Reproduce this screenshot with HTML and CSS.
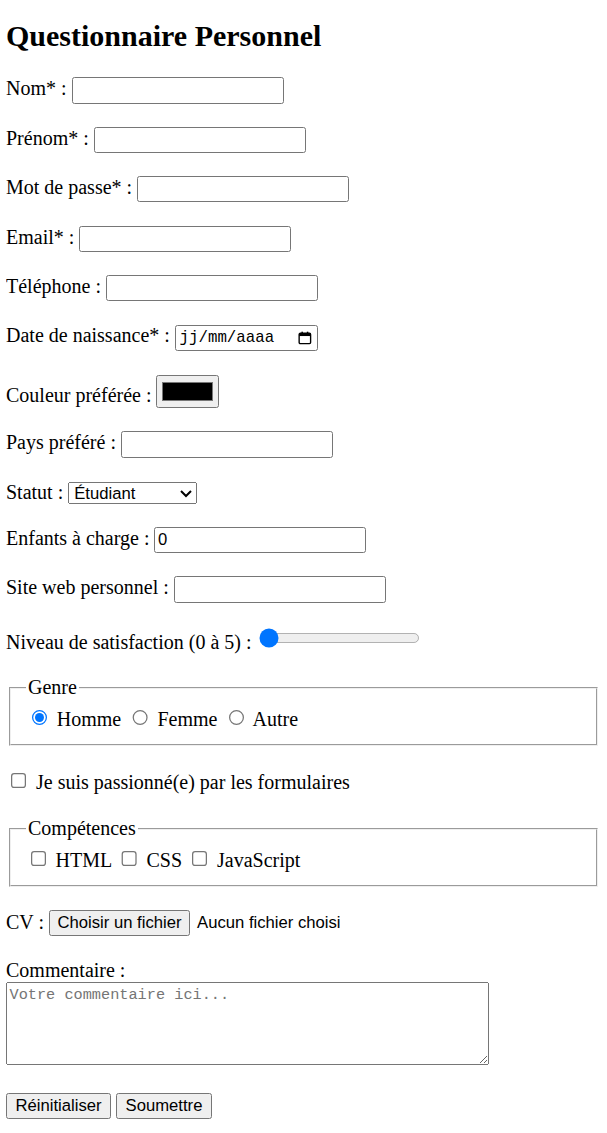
FILE: index.html
```html
<!DOCTYPE html>
<html lang="fr">
<head>
<meta charset="utf-8">
<title>Questionnaire Personnel</title>
<link rel="stylesheet" href="styles.css">
</head>
<body class="page">
<h2 class="title">Questionnaire Personnel</h2>
<form class="form">
  <p class="row"><label for="nom">Nom* :</label> <input class="field" type="text" id="nom"></p>
  <p class="row"><label for="prenom">Prénom* :</label> <input class="field" type="text" id="prenom"></p>
  <p class="row"><label for="mdp">Mot de passe* :</label> <input class="field" type="password" id="mdp"></p>
  <p class="row"><label for="email">Email* :</label> <input class="field" type="email" id="email"></p>
  <p class="row"><label for="tel">Téléphone :</label> <input class="field" type="tel" id="tel"></p>
  <p class="row"><label for="date">Date de naissance* :</label> <span class="datefield"><input class="date-input" type="text" id="date" placeholder="jj/mm/aaaa"><svg class="cal" viewBox="0 0 12 12" width="12" height="12" aria-hidden="true"><rect x="1" y="2" width="10" height="9" rx="1" fill="none" stroke="#000" stroke-width="1.2"/><rect x="1" y="2" width="10" height="2.4" fill="#000"/><rect x="3" y="0.6" width="1.3" height="2" fill="#000"/><rect x="7.7" y="0.6" width="1.3" height="2" fill="#000"/></svg></span></p>
  <p class="row"><label for="couleur">Couleur préférée :</label> <input class="color" type="color" id="couleur" value="#000000"></p>
  <p class="row"><label for="pays">Pays préféré :</label> <input class="field" type="text" id="pays"></p>
  <p class="row"><label for="statut">Statut :</label> <select class="select" id="statut"><option>Étudiant</option><option>Salarié</option><option>Indépendant</option></select></p>
  <p class="row"><label for="enfants">Enfants à charge :</label> <input class="field" type="number" id="enfants" value="0"></p>
  <p class="row"><label for="site">Site web personnel :</label> <input class="field" type="url" id="site"></p>
  <p class="row"><label for="satis">Niveau de satisfaction (0 à 5) :</label> <input class="range" type="range" id="satis" min="0" max="5" value="0"></p>
  <fieldset class="group">
    <legend>Genre</legend>
    <input type="radio" name="genre" id="homme" checked> <label for="homme">Homme</label>
    <input type="radio" name="genre" id="femme"> <label for="femme">Femme</label>
    <input type="radio" name="genre" id="autre"> <label for="autre">Autre</label>
  </fieldset>
  <p class="row"><input type="checkbox" id="passion"> <label for="passion">Je suis passionné(e) par les formulaires</label></p>
  <fieldset class="group">
    <legend>Compétences</legend>
    <input type="checkbox" id="html"> <label for="html">HTML</label>
    <input type="checkbox" id="css"> <label for="css">CSS</label>
    <input type="checkbox" id="js"> <label for="js">JavaScript</label>
  </fieldset>
  <p class="row"><label for="cv">CV :</label> <label class="filebtn" for="cv">Choisir un fichier</label><input class="file-hidden" type="file" id="cv"><span class="filename">Aucun fichier choisi</span></p>
  <p class="row"><label for="comment">Commentaire :</label><br><textarea class="comment" id="comment" placeholder="Votre commentaire ici..."></textarea></p>
  <p class="row"><button class="btn" type="reset">Réinitialiser</button> <button class="btn" type="submit">Soumettre</button></p>
</form>
</body>
</html>
```
FILE: styles.css
```css
html {
  background: #ffffff;
}
.page {
  zoom: 1.25;
  margin: 0 5.4px 0 4.8px;
  font-family: "Liberation Serif", "Times New Roman", serif;
  font-size: 16px;
  color: #000000;
}
.title {
  font-size: 24px;
  font-weight: bold;
  margin: 14.8px 0 19.92px;
}
.row {
  margin: 18.5px 0;
}
.field {
  box-sizing: border-box;
  width: 169.6px;
  height: 21px;
  padding: 1px 2px;
  border: 1px solid #767676;
  border-radius: 2px;
  font-family: "Liberation Sans", Arial, sans-serif;
  font-size: 13.33px;
}
.datefield {
  display: inline-flex;
  align-items: center;
  box-sizing: border-box;
  width: 114.4px;
  height: 21px;
  padding: 0 4px 0 3px;
  border: 1px solid #767676;
  border-radius: 2px;
}
.date-input {
  flex: 1;
  min-width: 0;
  border: 0;
  padding: 0;
  outline: none;
  background: transparent;
  font-family: "Liberation Mono", "Courier New", monospace;
  font-size: 12.6px;
}
.date-input::placeholder {
  color: #000000;
}
.cal {
  flex: none;
  width: 11px;
  height: 11px;
}
.select {
  box-sizing: border-box;
  width: 103px;
  height: 17.5px;
  font-family: "Liberation Sans", Arial, sans-serif;
  font-size: 13.33px;
}
.filebtn {
  display: inline-block;
  box-sizing: border-box;
  height: 21px;
  padding: 2px 6px 0;
  border: 1px solid #767676;
  border-radius: 2px;
  background: #efefef;
  font-family: "Liberation Sans", Arial, sans-serif;
  font-size: 13.33px;
  line-height: 16px;
}
.file-hidden {
  display: none;
}
.filename {
  margin-left: 5.6px;
  font-family: "Liberation Sans", Arial, sans-serif;
  font-size: 13.33px;
}
.btn {
  box-sizing: border-box;
  height: 21px;
  padding: 1px 6px;
  font-family: "Liberation Sans", Arial, sans-serif;
  font-size: 13.33px;
}
.comment {
  font-family: "Liberation Mono", "Courier New", monospace;
  font-size: 12.2px;
  width: 386px;
  height: 66px;
  box-sizing: border-box;
}
.comment::placeholder {
  color: #757575;
}
.group {
  margin: 0 2px;
  padding-bottom: 10px;
}
```
